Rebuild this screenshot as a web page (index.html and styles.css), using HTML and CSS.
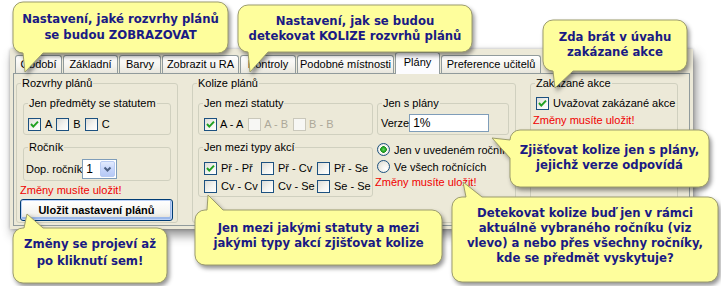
FILE: index.html
```html
<!DOCTYPE html>
<html lang="cs">
<head>
<meta charset="utf-8">
<title>Nastavení plánů</title>
<link rel="stylesheet" href="styles.css">
</head>
<body>
<div class="stage">
  <div class="window">
    <div class="tabs">
      <div class="tab">Období</div>
      <div class="tab">Základní</div>
      <div class="tab">Barvy</div>
      <div class="tab">Zobrazit u RA</div>
      <div class="tab">Kontroly</div>
      <div class="tab">Podobné místnosti</div>
      <div class="tab active">Plány</div>
      <div class="tab">Preference učitelů</div>
    </div>
    <div class="pane">
      <div class="group g1">
        <div class="legend">Rozvrhy plánů</div>
        <div class="gbody">
          <div class="group sub s-status">
            <div class="legend">Jen předměty se statutem</div>
            <div class="gbody">
              <div class="row">
                <span class="item"><span class="cb"><svg viewBox="0 0 11 11"><polyline points="2,5 4.3,7.6 9,2.6"/></svg></span>A</span>
                <span class="item"><span class="cb"></span>B</span>
                <span class="item"><span class="cb"></span>C</span>
              </div>
            </div>
          </div>
          <div class="group sub s-rocnik">
            <div class="legend">Ročník</div>
            <div class="gbody">
              <div class="row tall">
                <span class="lbl">Dop. ročník</span>
                <span class="combo"><span class="combo-val">1</span><span class="combo-btn"><svg viewBox="0 0 13 14"><polyline points="3.5,5.5 6.5,8.5 9.5,5.5"/></svg></span></span>
              </div>
            </div>
          </div>
          <div class="warn">Změny musíte uložit!</div>
          <button class="btn" type="button">Uložit nastavení plánů</button>
        </div>
      </div>

      <div class="group g2">
        <div class="legend">Kolize plánů</div>
        <div class="gbody cols">
          <div class="col-left">
            <div class="group sub s-statuty">
              <div class="legend">Jen mezi statuty</div>
              <div class="gbody">
                <div class="row">
                  <span class="item"><span class="cb"><svg viewBox="0 0 11 11"><polyline points="2,5 4.3,7.6 9,2.6"/></svg></span>A - A</span>
                  <span class="item dis"><span class="cb"></span>A - B</span>
                  <span class="item dis"><span class="cb"></span>B - B</span>
                </div>
              </div>
            </div>
            <div class="group sub s-typy">
              <div class="legend">Jen mezi typy akcí</div>
              <div class="gbody grid3">
                <span class="item"><span class="cb"><svg viewBox="0 0 11 11"><polyline points="2,5 4.3,7.6 9,2.6"/></svg></span>Př - Př</span>
                <span class="item"><span class="cb"></span>Př - Cv</span>
                <span class="item"><span class="cb"></span>Př - Se</span>
                <span class="item"><span class="cb"></span>Cv - Cv</span>
                <span class="item"><span class="cb"></span>Cv - Se</span>
                <span class="item"><span class="cb"></span>Se - Se</span>
              </div>
            </div>
          </div>
          <div class="col-right">
            <div class="group sub s-plany">
              <div class="legend">Jen s plány</div>
              <div class="gbody">
                <div class="row field">
                  <span class="lbl">Verze</span>
                  <span class="input">1%</span>
                </div>
              </div>
            </div>
            <div class="radio-row first"><span class="rb on"></span>Jen v uvedeném ročníku</div>
            <div class="radio-row"><span class="rb"></span>Ve všech ročnících</div>
            <div class="warn shift">Změny musíte uložit!</div>
          </div>
        </div>
      </div>

      <div class="group g3">
        <div class="legend">Zakázané akce</div>
        <div class="gbody">
          <div class="row">
            <span class="item indent"><span class="cb"><svg viewBox="0 0 11 11"><polyline points="2,5 4.3,7.6 9,2.6"/></svg></span>Uvažovat zakázané akce</span>
          </div>
          <div class="warn">Změny musíte uložit!</div>
        </div>
      </div>
    </div>
  </div>

  <div class="callout c1">
    <svg class="shape"><path d="M10,0 H205 A10,10 0 0 1 215,10 V41 A10,10 0 0 1 205,51 H30 L12,70 L10,51 A10,10 0 0 1 0,41 V10 A10,10 0 0 1 10,0 Z"/></svg>
    <div class="txt">Nastavení, jaké rozvrhy plánů<br>se budou ZOBRAZOVAT</div>
  </div>
  <div class="callout c2">
    <svg class="shape"><path d="M10,0 H224 A10,10 0 0 1 234,10 V37 A10,10 0 0 1 224,47 H30 L12,67 L10,47 A10,10 0 0 1 0,37 V10 A10,10 0 0 1 10,0 Z"/></svg>
    <div class="txt">Nastavení, jak se budou<br>detekovat KOLIZE rozvrhů plánů</div>
  </div>
  <div class="callout c3">
    <svg class="shape"><path d="M10,0 H134 A10,10 0 0 1 144,10 V41 A10,10 0 0 1 134,51 H30 L12,68 L10,51 A10,10 0 0 1 0,41 V10 A10,10 0 0 1 10,0 Z"/></svg>
    <div class="txt">Zda brát v úvahu<br>zakázané akce</div>
  </div>
  <div class="callout c4">
    <svg class="shape"><path d="M10,0 H11 L14,-14 L30,0 H144 A10,10 0 0 1 154,10 V45 A10,10 0 0 1 144,55 H10 A10,10 0 0 1 0,45 V10 A10,10 0 0 1 10,0 Z"/></svg>
    <div class="txt">Změny se projeví až<br>po kliknutí sem!</div>
  </div>
  <div class="callout c5">
    <svg class="shape"><path d="M10,0 H12 L13,-15 L28,0 H237 A10,10 0 0 1 247,10 V45 A10,10 0 0 1 237,55 H10 A10,10 0 0 1 0,45 V10 A10,10 0 0 1 10,0 Z"/></svg>
    <div class="txt">Jen mezi jakými statuty a mezi<br>jakými typy akcí zjišťovat kolize</div>
  </div>
  <div class="callout c6">
    <svg class="shape"><path d="M10,0 H189 A10,10 0 0 1 199,10 V47 A10,10 0 0 1 189,57 H10 A10,10 0 0 1 0,47 V28 L-18,8 L0,10 A10,10 0 0 1 10,0 Z"/></svg>
    <div class="txt">Zjišťovat kolize jen s plány,<br>jejichž verze odpovídá</div>
  </div>
  <div class="callout c7">
    <svg class="shape"><path d="M10,0 H14 L11,-15 L30,0 H256 A10,10 0 0 1 266,10 V75 A10,10 0 0 1 256,85 H10 A10,10 0 0 1 0,75 V10 A10,10 0 0 1 10,0 Z"/></svg>
    <div class="txt">Detekovat kolize buď jen v rámci<br>aktuálně vybraného ročníku (viz<br>vlevo) a nebo přes všechny ročníky,<br>kde se předmět vyskytuje?</div>
  </div>
</div>
</body>
</html>
```

FILE: styles.css
```css
* { box-sizing: border-box; }

html, body {
  margin: 0;
  padding: 0;
  background: #ffffff;
}

body {
  font-family: "Liberation Sans", Arial, sans-serif;
  font-size: 11px;
  color: #000000;
}

.stage {
  position: relative;
  width: 721px;
  height: 286px;
  overflow: hidden;
  padding: 49px 0 0 10px;
}

/* ---------- window & tabs ---------- */
.window {
  width: 683px;
  height: 180px;
  background: #ECE9D8;
  padding: 4px 3px 3px 3px;
  box-shadow: 3px 6px 10px rgba(0, 0, 0, 0.45), 0 0 3px rgba(0, 0, 0, 0.25);
}

.tabs {
  display: flex;
  align-items: flex-end;
  height: 20px;
  padding-left: 2px;
}

.tab {
  height: 18px;
  line-height: 17px;
  text-align: center;
  white-space: nowrap;
  border: 1px solid #919B9C;
  border-bottom: none;
  border-radius: 3px 3px 0 0;
  background: linear-gradient(#FFFFFF, #F4F3EE 60%, #E8E6DC);
  margin-right: 1px;
  flex: none;
}

.tab:nth-child(1) { width: 47px; }
.tab:nth-child(2) { width: 55px; }
.tab:nth-child(3) { width: 42px; }
.tab:nth-child(4) { width: 77px; }
.tab:nth-child(5) { width: 56px; }
.tab:nth-child(6) { width: 97px; }
.tab:nth-child(7) { width: 45px; }
.tab:nth-child(8) { width: 100px; }

.tab.active {
  height: 22px;
  line-height: 19px;
  margin-bottom: -1px;
  background: #FCFCFE;
  z-index: 1;
}

.pane {
  height: 153px;
  border: 1px solid #919B9C;
  background: #ECE9D8;
  display: flex;
  align-items: stretch;
  gap: 14px;
  padding: 3px 2px 2px 2px;
}

/* ---------- group boxes ---------- */
.group {
  border: 1px solid #D0D0BF;
  border-radius: 3px;
  margin-top: 6px;
}

.legend {
  display: table;
  margin: -7px 0 0 4px;
  padding: 0 1px;
  line-height: 13px;
  background: #ECE9D8;
  white-space: nowrap;
}

.g1 { width: 162px; flex: none; }
.g2 { width: 324px; flex: none; }
.g3 { width: 148px; flex: none; }

.g1 > .gbody { padding: 0 3px; }

.sub { margin: 13px 0 0 0; }
.g1 .sub { margin-left: 3px; margin-right: 3px; }
.g1 .s-rocnik { margin-top: 12px; }

.s-status > .gbody { padding: 7px 4px 3px 4px; }
.s-rocnik > .gbody { padding: 5px 2px 1px 2px; }

.row {
  display: flex;
  align-items: center;
  height: 14px;
  gap: 4px;
  white-space: nowrap;
}

.row.tall { height: 20px; gap: 0; }
.row.field { height: 18px; gap: 0; }

.item {
  display: inline-flex;
  align-items: center;
  white-space: nowrap;
  height: 14px;
}

.cb {
  display: inline-flex;
  align-items: center;
  justify-content: center;
  width: 13px;
  height: 13px;
  flex: none;
  border: 1px solid #1C5180;
  background: linear-gradient(135deg, #DCDCD7 0%, #F4F4F0 55%, #FFFFFF 100%);
  margin-right: 4px;
}

.cb svg {
  width: 11px;
  height: 11px;
  fill: none;
  stroke: #21A121;
  stroke-width: 2;
}

.item.dis { color: #ACA899; }
.item.dis .cb {
  border-color: #CAC8BB;
  background: #F7F7F4;
}

.lbl { white-space: nowrap; }

.combo {
  display: flex;
  width: 35px;
  height: 20px;
  border: 1px solid #7F9DB9;
  background: #FFFFFF;
  padding: 1px;
}

.combo-val {
  flex: 1;
  padding-left: 2px;
  line-height: 16px;
  font-size: 12px;
}

.combo-btn {
  display: flex;
  align-items: center;
  justify-content: center;
  width: 15px;
  height: 16px;
  border: 1px solid #B9CBF3;
  border-radius: 2px;
  background: linear-gradient(#E3EBFE, #C7D6FB 50%, #B6C9F5);
}

.combo-btn svg {
  width: 13px;
  height: 14px;
  fill: none;
  stroke: #4D6185;
  stroke-width: 2;
}

.warn {
  color: #F00000;
  line-height: 13px;
  margin-top: 3px;
  white-space: nowrap;
}

.btn {
  display: block;
  width: 153px;
  height: 22px;
  margin: 2px 0 0 0;
  padding: 0;
  border: 1px solid #003C74;
  border-radius: 3px;
  background: linear-gradient(#FFFFFF, #F4F4F0 65%, #DCD8CE);
  box-shadow: inset 0 0 0 1px #BDD2F6, inset -1px -2px 0 1px #9CB9EA;
  font-family: "Liberation Sans", Arial, sans-serif;
  font-weight: bold;
  font-size: 11px;
  color: #000000;
}

/* ---------- Kolize plánů ---------- */
.cols {
  display: flex;
  gap: 4px;
  padding: 0 6px 0 5px;
}

.col-left { width: 175px; flex: none; }
.col-right { width: 132px; flex: none; }

.s-statuty > .gbody { padding: 7px 5px 3px 5px; }
.s-statuty .row { gap: 5px; }
.s-statuty .cb { margin-right: 3px; }

.s-typy { margin-top: 12px; }
.grid3 {
  display: grid;
  grid-template-columns: 57px 56px auto;
  grid-auto-rows: 14px;
  row-gap: 4px;
  padding: 7px 5px 3px 5px;
}

.s-plany > .gbody { padding: 4px 3px 2px 3px; }

.input {
  display: block;
  width: 80px;
  height: 18px;
  border: 1px solid #7F9DB9;
  background: #FFFFFF;
  padding-left: 3px;
  line-height: 16px;
  font-size: 12px;
}

.radio-row {
  display: flex;
  align-items: center;
  height: 13px;
  margin-top: 4px;
  white-space: nowrap;
}

.radio-row.first { margin-top: 8px; }

.rb {
  width: 13px;
  height: 13px;
  flex: none;
  border-radius: 50%;
  border: 1px solid #1C5180;
  background: radial-gradient(circle at 70% 70%, #FFFFFF 0, #F0F0EA 45%, #D6D6CE 100%);
  margin-right: 4px;
}

.rb.on {
  background: radial-gradient(circle at 50% 50%, #62D862 0, #21A121 2.4px, #1B8A1B 3px, #FFFFFF 3.6px, #EDEDE6 60%, #D6D6CE 100%);
}

.warn.shift { margin-left: -2px; }

/* ---------- Zakázané akce ---------- */
.g3 > .gbody { padding: 6px 2px 0 2px; }
.item.indent { margin-left: 3px; }
.g3 .warn { margin-top: 4px; }

/* ---------- callouts ---------- */
.callout {
  position: absolute;
  z-index: 5;
}

.callout .shape {
  position: absolute;
  left: 0;
  top: 0;
  width: 100%;
  height: 100%;
  overflow: visible;
  filter: drop-shadow(2px 3px 2px rgba(0, 0, 0, 0.42));
}

.callout path {
  fill: #FEFE9C;
  stroke: #9C9C6C;
  stroke-width: 1;
}

.callout .txt {
  position: relative;
  height: 100%;
  display: flex;
  align-items: center;
  justify-content: center;
  text-align: center;
  white-space: nowrap;
  font-family: "DejaVu Sans", sans-serif;
  font-weight: bold;
  font-size: 11.7px;
  line-height: 15px;
  color: #1A1A84;
}

.c1 { left: 13px; top: 2px; width: 215px; height: 51px; }
.c1 .txt { line-height: 16px; padding-bottom: 2px; }

.c2 { left: 238px; top: 5px; width: 234px; height: 47px; }

.c3 { left: 543px; top: 20px; width: 144px; height: 51px; }
.c3 .txt { padding-bottom: 2px; }

.c4 { left: 13px; top: 228px; width: 154px; height: 55px; }
.c4 .txt { line-height: 17px; padding-bottom: 6px; }

.c5 { left: 195px; top: 210px; width: 247px; height: 55px; }
.c5 .txt { padding-bottom: 3px; }

.c6 { left: 510px; top: 130px; width: 199px; height: 57px; }
.c6 .txt { padding-bottom: 2px; }

.c7 { left: 452px; top: 197px; width: 266px; height: 85px; }
.c7 .txt { padding-bottom: 8px; }
```
